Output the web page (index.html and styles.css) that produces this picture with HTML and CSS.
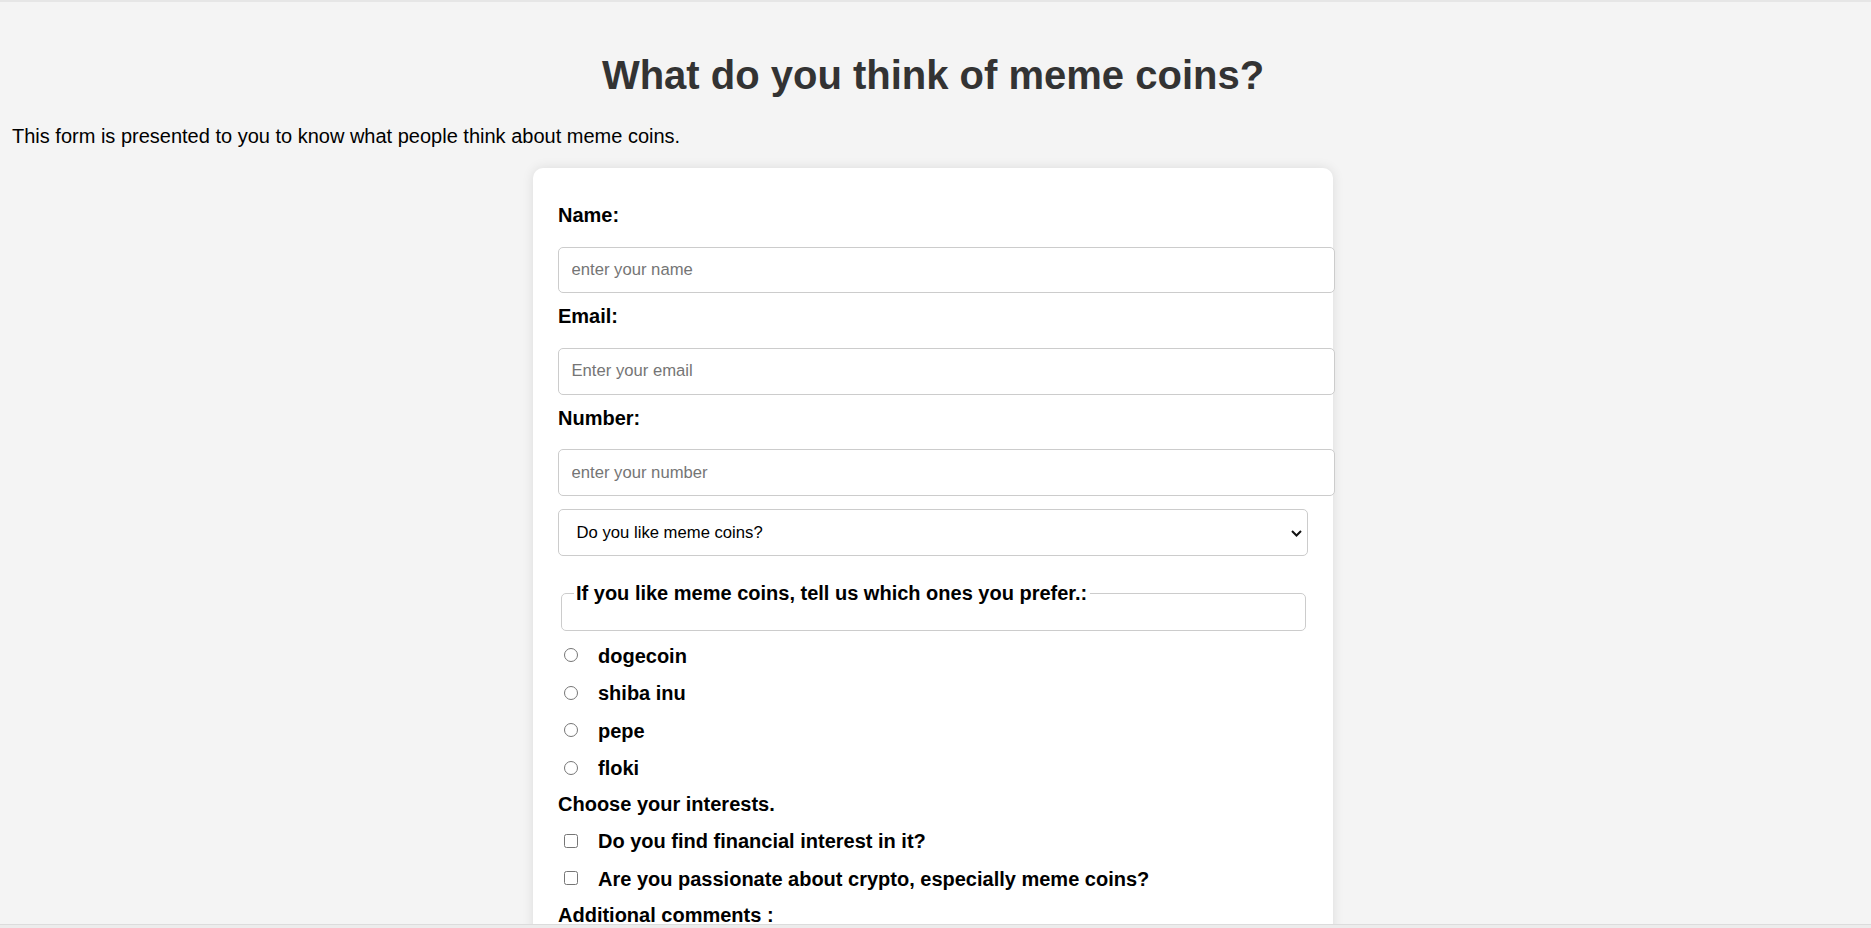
FILE: index.html
```html
<!DOCTYPE html>
<html lang="en">
<head>
<meta charset="utf-8">
<title>Meme coins survey</title>
<link rel="stylesheet" href="styles.css">
</head>
<body>
  <div class="topline"></div>
  <h1 class="title">What do you think of meme coins?</h1>
  <p class="intro">This form is presented to you to know what people think about meme coins.</p>
  <form class="card">
    <label class="label label-first" for="name">Name:</label>
    <input class="field" id="name" type="text" placeholder="enter your name">
    <label class="label" for="email">Email:</label>
    <input class="field" id="email" type="email" placeholder="Enter your email">
    <label class="label" for="number">Number:</label>
    <input class="field" id="number" type="number" placeholder="enter your number">
    <div class="select-wrap">
      <select class="select">
        <option>Do you like meme coins?</option>
        <option>Yes</option>
        <option>No</option>
      </select>
      <svg class="chevron" width="11" height="7" viewBox="0 0 11 7"><path d="M1 1 L5.5 5.5 L10 1" fill="none" stroke="#111" stroke-width="2"/></svg>
    </div>
    <fieldset class="group">
      <legend class="legend">If you like meme coins, tell us which ones you prefer.:</legend>
    </fieldset>
    <label class="opt opt-first"><input class="radio" type="radio" name="coin"><span>dogecoin</span></label>
    <label class="opt"><input class="radio" type="radio" name="coin"><span>shiba inu</span></label>
    <label class="opt"><input class="radio" type="radio" name="coin"><span>pepe</span></label>
    <label class="opt"><input class="radio" type="radio" name="coin"><span>floki</span></label>
    <div class="heading">Choose your interests.</div>
    <label class="opt"><input class="check" type="checkbox"><span>Do you find financial interest in it?</span></label>
    <label class="opt"><input class="check" type="checkbox"><span>Are you passionate about crypto, especially meme coins?</span></label>
    <label class="heading" for="comments">Additional comments :</label>
    <textarea class="comments" id="comments" rows="5"></textarea>
    <button class="submit" type="submit">Submit</button>
  </form>
  <div class="bottombar"></div>
</body>
</html>
```
FILE: styles.css
```css
html {
  background: #f4f4f4;
}
body {
  margin: 0;
  padding: 25.2px 17px 40px 12px;
  font-family: "Liberation Sans", Arial, sans-serif;
  color: #000;
  background: #f4f4f4;
}
.topline {
  position: fixed;
  top: 0;
  left: 0;
  right: 0;
  height: 2px;
  background: #e6e6e6;
}
.bottombar {
  position: fixed;
  left: 0;
  right: 0;
  bottom: 0;
  height: 3px;
  background: #ececec;
  border-top: 1px solid #dcdcdc;
}
.title {
  margin: 26.8px 0;
  font-size: 40px;
  line-height: 46px;
  font-weight: bold;
  color: #333;
  text-align: center;
}
.intro {
  margin: 20px 0;
  font-size: 20px;
  line-height: 23px;
}
.card {
  width: 750px;
  margin: 0 auto;
  padding: 25px;
  background: #fff;
  border-radius: 10px;
  box-shadow: 0 0 12px rgba(0, 0, 0, 0.1);
}
.label {
  display: block;
  margin: 12px 0 19.5px;
  font-size: 20px;
  line-height: 23px;
  font-weight: bold;
}
.label-first {
  margin-top: 11.5px;
}
.field {
  display: block;
  box-sizing: content-box;
  width: 100%;
  height: 20.7px;
  margin: 0;
  padding: 12px 12.5px;
  border: 1px solid #ccc;
  border-radius: 5px;
  font-family: "Liberation Sans", Arial, sans-serif;
  font-size: 16.67px;
  color: #000;
  background: #fff;
  outline: none;
}
.field::placeholder {
  color: #757575;
}
.field::-webkit-outer-spin-button,
.field::-webkit-inner-spin-button {
  -webkit-appearance: none;
  margin: 0;
}
.select-wrap {
  position: relative;
  margin-top: 13.2px;
}
.select {
  display: block;
  box-sizing: border-box;
  width: 100%;
  height: 47.4px;
  margin: 0;
  padding: 0 17.6px;
  border: 1px solid #ccc;
  border-radius: 5px;
  -webkit-appearance: none;
  appearance: none;
  background: #fff;
  font-family: "Liberation Sans", Arial, sans-serif;
  font-size: 16.67px;
  color: #000;
}
.chevron {
  position: absolute;
  right: 6px;
  top: 20.5px;
  pointer-events: none;
}
.group {
  margin: 25.1px 2.5px 0;
  padding: 0 12px 25.2px;
  border: 1px solid #ccc;
  border-radius: 5px;
  min-width: 0;
}
.legend {
  padding: 0 2.5px;
  font-size: 20px;
  line-height: 23px;
  font-weight: bold;
}
.opt {
  display: flex;
  align-items: center;
  margin-top: 14.5px;
  font-size: 20px;
  line-height: 23px;
  font-weight: bold;
}
.opt-first {
  margin-top: 13.8px;
}
.radio,
.check {
  -webkit-appearance: none;
  appearance: none;
  flex: none;
  box-sizing: border-box;
  width: 14px;
  height: 14px;
  margin: 0 20.5px 2px 5.5px;
  border: 1px solid #767676;
  background: #fff;
}
.radio {
  border-radius: 50%;
}
.check {
  border-radius: 2.5px;
}
.heading {
  display: block;
  margin-top: 12.8px;
  font-size: 20px;
  line-height: 23px;
  font-weight: bold;
}
.comments {
  display: block;
  box-sizing: border-box;
  width: 100%;
  margin-top: 12px;
  padding: 12.5px;
  border: 1px solid #ccc;
  border-radius: 5px;
  font-family: "Liberation Sans", Arial, sans-serif;
  font-size: 16.67px;
}
.submit {
  margin-top: 20px;
  padding: 12.5px 25px;
  border: none;
  border-radius: 5px;
  background: #333;
  color: #fff;
  font-family: "Liberation Sans", Arial, sans-serif;
  font-size: 20px;
}
```
